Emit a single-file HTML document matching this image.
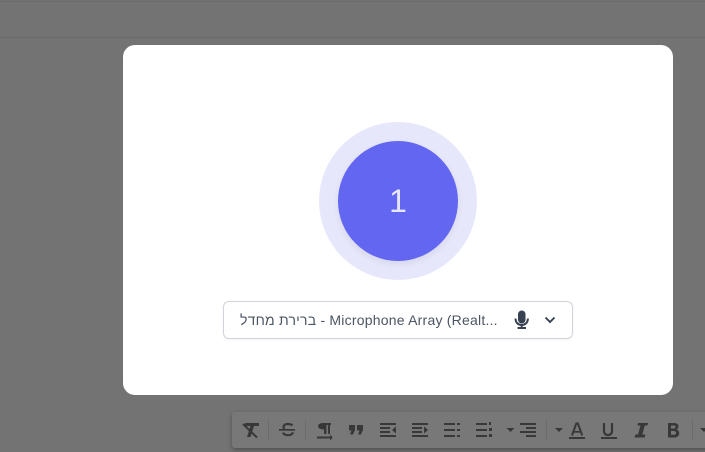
<!DOCTYPE html>
<html lang="en">
<head>
<meta charset="utf-8">
<title>Recording countdown</title>
<style>
html,body{margin:0;padding:0;width:705px;height:452px;overflow:hidden;background:#737373;font-family:"Liberation Sans","Noto Sans CJK SC",sans-serif}
.line{position:absolute;left:0;width:705px;height:1px;background:#6b6b6b}
.tb{position:absolute;left:232px;top:412px;width:480px;height:36px;background:#787878;border-radius:3px;box-shadow:0 2px 5px rgba(0,0,0,.32)}
.tbsvg{position:absolute;left:0;top:0;filter:blur(.35px)}
.card{position:absolute;left:123px;top:45px;width:550px;height:350px;background:#fff;border-radius:12px}
.halo{position:absolute;left:319px;top:122px;width:158px;height:158px;border-radius:50%;background:#e6e7fb}
.disc{position:absolute;left:338px;top:141px;width:120px;height:120px;border-radius:50%;background:#6366f1;box-shadow:0 3px 7px rgba(0,0,0,.07);color:#e6e7fb;font-size:32px;line-height:120px;text-align:center}
.sel{position:absolute;left:223px;top:301px;width:348px;height:36px;border:1px solid #d1d5db;border-radius:6px;background:#fff;box-shadow:0 1px 2px rgba(0,0,0,.05)}
.label{position:absolute;left:16px;top:0;line-height:36px;font-size:14px;letter-spacing:.22px;color:#4b5563;white-space:nowrap;direction:ltr}
.icons{position:absolute;left:0;top:0}
</style>
</head>
<body>
<div class="line" style="top:1px"></div>
<div class="line" style="top:37px"></div>
<div class="tb"></div>
<svg class="tbsvg" width="705" height="452" viewBox="0 0 705 452" fill="#383838" stroke="none">
  <!-- separators -->
  <g fill="#6c6c6c">
    <rect x="268" y="420" width="1" height="20"/><rect x="305" y="420" width="1" height="20"/>
    <rect x="546" y="420" width="1" height="20"/><rect x="692" y="420" width="1" height="20"/>
  </g>
  <!-- clear format -->
  <path d="M245 423h14v3h-5l-3.500 11h-3.500l3.500-11h-5.500z"/>
  <path d="M243 424l14 13.500" stroke="#383838" stroke-width="2"/>
  <!-- strikethrough -->
  <path d="M292.500 425.500c-1-1-2.500-1.500-4.500-1.500c-3 0-4.500 1.500-4.500 3c0 1 .4 1.500 1 2M283 432.500c.7 1.700 2.700 2.700 5 2.700c3 0 4.700-1.300 4.700-3" fill="none" stroke="#383838" stroke-width="2.200"/>
  <rect x="279" y="429" width="16" height="1.700"/>
  <!-- paragraph direction -->
  <path d="M323 423h8v2h-1v9h-2v-9h-1.500v9h-2.500v-4.500c-3.500 0-6-1-6-3.200s2.500-3.300 5-3.300z"/>
  <rect x="317" y="436.500" width="13.500" height="2"/><path d="M330 434.500l2.800 3-2.800 3z"/>
  <!-- quote -->
  <path d="M349 425h6v5l-2 4.500h-3l1.500-4h-2.500zM357 425h6v5l-2 4.500h-3l1.500-4h-2.500z"/>
  <!-- outdent -->
  <path d="M380 423h16v2h-16zM380 427h10v2h-10zM380 431h10v2h-10zM380 435h16v2h-16z"/><path d="M396 426.500v7l-4-3.500z"/>
  <!-- indent -->
  <path d="M412 423h16v2h-16zM412 427h10v2h-10zM412 431h10v2h-10zM412 435h16v2h-16z"/><path d="M424 426.500v7l4-3.500z"/>
  <!-- bullets -->
  <path d="M444 423h11v2h-11zM444 429h11v2h-11zM444 435h11v2h-11zM457 423h3v2h-3zM457 429h3v2h-3zM457 435h3v2h-3z"/>
  <!-- numbered -->
  <path d="M476 423h11v2h-11zM476 429h11v2h-11zM476 435h11v2h-11zM489 422h2v3h-2zM489 428h3v3h-3zM489 434h3v3h-3z"/>
  <!-- caret + align -->
  <path d="M506.500 428h8l-4 4z"/>
  <path d="M520 423h16v2h-16zM526 427h10v2h-10zM520 431h16v2h-16zM526 435h10v2h-10z"/>
  <path d="M555 428h8l-4 4z"/>
  <!-- A -->
  <path d="M572 435.500l4.300-12h1.600l4.300 12" fill="none" stroke="#383838" stroke-width="2"/><path d="M573.500 431h7v1.700h-7z"/><rect x="569" y="437" width="16" height="2"/>
  <!-- U -->
  <path d="M604 423v7.500c0 3 1.500 4.500 4 4.500s4-1.500 4-4.500v-7.500" fill="none" stroke="#383838" stroke-width="2.200"/><rect x="601" y="437" width="16" height="2"/>
  <!-- I -->
  <path d="M638 423h10l-.6 2.500h-2.600l-2.500 9h3l-.7 3h-10l.7-3h2.700l2.500-9h-3z"/>
  <!-- B -->
  <path d="M668 423h6c3 0 4.500 1.500 4.500 3.500c0 1.300-.7 2.400-2 3c1.800.6 2.700 2 2.700 3.700c0 2.500-2 4.300-5 4.300h-6.200zM671 425.500v3h2.500c1.200 0 2-.6 2-1.500s-.8-1.500-2-1.500zM671 431v3.800h2.800c1.400 0 2.300-.8 2.300-1.900s-.9-1.900-2.300-1.900z" fill-rule="evenodd"/>
  <path d="M700 428h8l-4 4z"/>
</svg>
<div class="card"></div>
<div class="halo"></div>
<div class="disc">1</div>
<div class="sel">
  <div class="label">ברירת מחדל - Microphone Array (Realt...</div>
</div>
<svg class="icons" width="705" height="452" viewBox="0 0 705 452">
  <rect x="518" y="310.500" width="7.500" height="13" rx="3.700" fill="#374151"/>
  <path d="M515.500 318.500c0 4 2.700 6.500 6.200 6.500s6.200-2.500 6.200-6.500" fill="none" stroke="#374151" stroke-width="2"/>
  <path d="M521.700 324.500v3.500M517.500 328h8.500" fill="none" stroke="#374151" stroke-width="1.900"/>
  <path d="M545.500 317.500l4.500 4.500 4.500-4.500" fill="none" stroke="#374151" stroke-width="1.900"/>
</svg>
</body>
</html>
